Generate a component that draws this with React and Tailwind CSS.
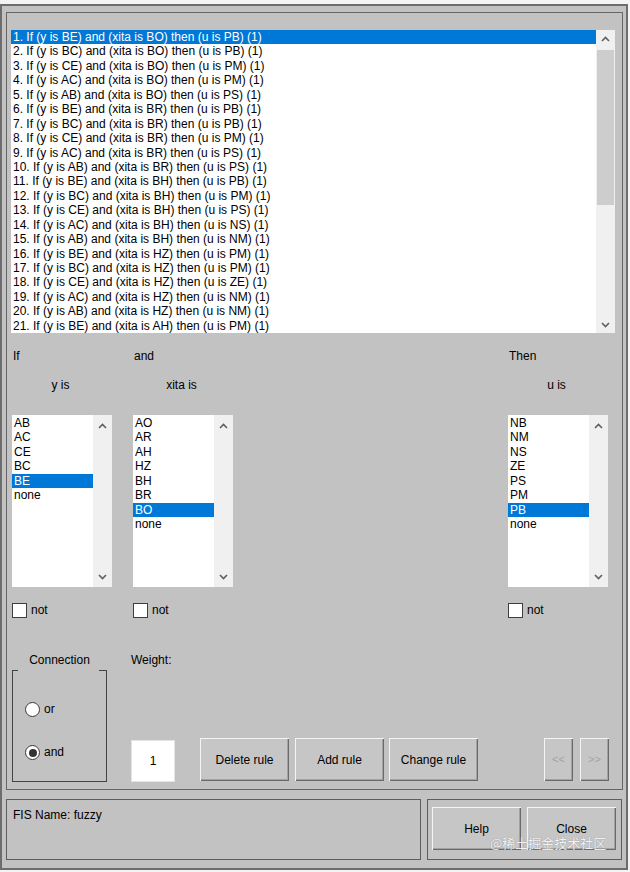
import React from "react";

const rules = [
  ["BE", "BO", "PB"], ["BC", "BO", "PB"], ["CE", "BO", "PM"], ["AC", "BO", "PM"], ["AB", "BO", "PS"],
  ["BE", "BR", "PB"], ["BC", "BR", "PB"], ["CE", "BR", "PM"], ["AC", "BR", "PS"], ["AB", "BR", "PS"],
  ["BE", "BH", "PB"], ["BC", "BH", "PM"], ["CE", "BH", "PS"], ["AC", "BH", "NS"], ["AB", "BH", "NM"],
  ["BE", "HZ", "PM"], ["BC", "HZ", "PM"], ["CE", "HZ", "ZE"], ["AC", "HZ", "NM"], ["AB", "HZ", "NM"],
  ["BE", "AH", "PM"],
];

function Chevron({ dir }) {
  return (
    <svg width="9" height="6" viewBox="0 0 9 6">
      <path
        d={dir === "up" ? "M1 5L4.5 1.5L8 5" : "M1 1L4.5 4.5L8 1"}
        fill="none"
        stroke="#5f5f5f"
        strokeWidth="1.6"
      />
    </svg>
  );
}

function ScrollBar({ arrowH, thumb }) {
  return (
    <div className="flex w-[19px] shrink-0 flex-col bg-[#f0f0f0]">
      <div className="flex shrink-0 items-center justify-center" style={{ height: arrowH }}>
        <Chevron dir="up" />
      </div>
      <div className="flex flex-1 flex-col">
        {thumb && (
          <>
            <div className="shrink-0" style={{ height: thumb[0] }} />
            <div className="mx-[1px] shrink-0 bg-[#cdcdcd]" style={{ height: thumb[1] }} />
          </>
        )}
      </div>
      <div className="flex shrink-0 items-center justify-center" style={{ height: arrowH }}>
        <Chevron dir="down" />
      </div>
    </div>
  );
}

function Row({ text, selected }) {
  return (
    <div
      className={
        "h-[14.45px] whitespace-nowrap pl-[2px] leading-[14.45px] " +
        (selected ? "bg-[#0078d7] text-white" : "text-black")
      }
    >
      {text}
    </div>
  );
}

function MemberList({ items, selected }) {
  return (
    <div className="flex h-[172px] w-[100px] bg-white">
      <div className="flex-1 overflow-hidden pt-[1px]">
        {items.map((it) => (
          <Row key={it} text={it} selected={it === selected} />
        ))}
      </div>
      <ScrollBar arrowH={21} />
    </div>
  );
}

function Column({ head, sub, items, selected, className }) {
  return (
    <div className={"flex w-[100px] flex-col " + className}>
      <div className="h-[14px] pl-[1px] leading-[14px]">{head}</div>
      <div className="mt-[15px] h-[14px] pr-[3px] text-center leading-[14px]">{sub}</div>
      <div className="mt-[23px]">
        <MemberList items={items} selected={selected} />
      </div>
      <div className="mt-[16px] flex items-center gap-[4px]">
        <div className="h-[15px] w-[15px] border border-[#3d3d3d] bg-white" />
        <span className="leading-[15px]">not</span>
      </div>
    </div>
  );
}

function Button({ children, className = "", muted }) {
  return (
    <div
      className={
        "flex items-center justify-center bg-[#c6c6c6] shadow-[inset_1px_1px_0_#f4f4f4,inset_-1px_-1px_0_#6a6a6a,inset_-2px_-2px_0_#a2a2a2] " +
        (muted ? "text-[11px] text-[#a3a3a3] " : "text-black ") +
        className
      }
    >
      {children}
    </div>
  );
}

function Radio({ checked, label }) {
  return (
    <div className="flex items-center gap-[4px]">
      <div className="flex h-[15px] w-[15px] items-center justify-center rounded-full border border-[#3a3a3a] bg-white">
        {checked && <div className="h-[8px] w-[8px] rounded-full bg-[#333]" />}
      </div>
      <span className="leading-[15px]">{label}</span>
    </div>
  );
}

export default function App() {
  return (
    <div className="relative h-[872px] w-[630px] bg-[#f3f3f3] pt-[4px] font-['Liberation_Sans',Arial,sans-serif] text-[12px] text-black">
      <div className="flex h-[866px] w-[628px] flex-col border-2 border-[#6d6d6d] bg-[#c2c2c2]">
        {/* rule editor panel */}
        <div className="ml-[4px] mt-[6px] flex h-[778px] w-[617px] flex-col border border-[#666]">
          <div className="ml-[4px] mt-[17px] flex h-[303px] w-[604px] bg-white">
            <div className="flex-1 overflow-hidden">
              {rules.map((r, i) => (
                <Row
                  key={i}
                  selected={i === 0}
                  text={`${i + 1}. If (y is ${r[0]}) and (xita is ${r[1]}) then (u is ${r[2]}) (1)`}
                />
              ))}
            </div>
            <ScrollBar arrowH={17} thumb={[3, 155]} />
          </div>

          <div className="mt-[16px] flex">
            <Column
              className="ml-[5px]"
              head="If"
              sub="y is"
              items={["AB", "AC", "CE", "BC", "BE", "none"]}
              selected="BE"
            />
            <Column
              className="ml-[21px]"
              head="and"
              sub="xita is"
              items={["AO", "AR", "AH", "HZ", "BH", "BR", "BO", "none"]}
              selected="BO"
            />
            <Column
              className="ml-[275px]"
              head="Then"
              sub="u is"
              items={["NB", "NM", "NS", "ZE", "PS", "PM", "PB", "none"]}
              selected="PB"
            />
          </div>

          <div className="mt-[35px] flex items-start">
            <div className="ml-[5px] flex w-[95px] flex-col">
              <div className="h-[14px] text-center leading-[14px]">Connection</div>
              <div className="mt-[3px] flex h-[112px] flex-col border-x border-b border-[#444]">
                <div className="flex h-[1px]">
                  <div className="w-[5px] bg-[#444]" />
                  <div className="flex-1" />
                  <div className="w-[7px] bg-[#444]" />
                </div>
                <div className="ml-[12px] mt-[31px]">
                  <Radio label="or" />
                </div>
                <div className="ml-[12px] mt-[28px]">
                  <Radio label="and" checked />
                </div>
              </div>
            </div>

            <div className="ml-[24px] flex flex-col">
              <div className="h-[14px] leading-[14px]">Weight:</div>
              <div className="mt-[71px] flex items-start">
                <div className="mt-[2px] flex h-[42px] w-[44px] items-center justify-center bg-white shadow-[inset_0_0_0_1px_#e4e4e4]">
                  1
                </div>
                <Button className="ml-[25px] h-[43px] w-[89px]">Delete rule</Button>
                <Button className="ml-[6px] h-[43px] w-[89px]">Add rule</Button>
                <Button className="ml-[5px] h-[43px] w-[89px]">Change rule</Button>
                <Button muted className="ml-[66px] h-[43px] w-[29px]">&lt;&lt;</Button>
                <Button muted className="ml-[7px] h-[43px] w-[29px]">&gt;&gt;</Button>
              </div>
            </div>
          </div>
        </div>

        {/* status and dialog buttons */}
        <div className="ml-[4px] mt-[9px] flex">
          <div className="h-[61px] w-[415px] border border-[#5e5e5e] pl-[6px] pt-[8px] leading-[14px]">
            FIS Name: fuzzy
          </div>
          <div className="ml-[6px] flex h-[61px] w-[195px] items-start border border-[#5e5e5e]">
            <Button className="ml-[4px] mt-[7px] h-[43px] w-[89px]">Help</Button>
            <Button className="ml-[6px] mt-[7px] h-[43px] w-[89px]">Close</Button>
          </div>
        </div>
      </div>

      <div className="pointer-events-none absolute left-[490px] top-[834px] font-['Noto_Sans_CJK_SC',sans-serif] text-[13px] leading-[18px] text-[#f7f7f7] opacity-90 [text-shadow:0_0_1px_#7a7a7a]">
        @稀土掘金技术社区
      </div>
    </div>
  );
}
